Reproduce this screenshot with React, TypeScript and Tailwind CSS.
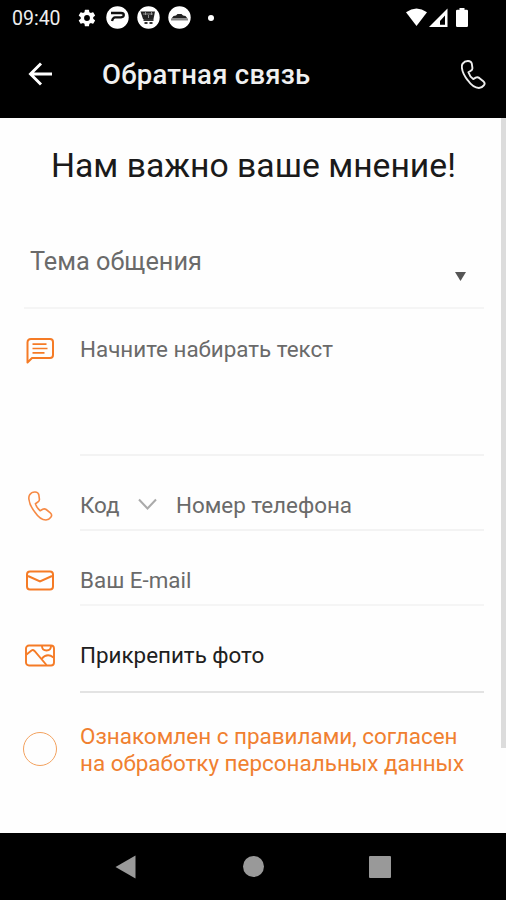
import React from "react";

const PHONE =
  "M1.700 3.600C3 1.800 5 .9 7.100 1c2.300.1 3.300.9 3.700 2.600l.6 4.200c.2 1.600-.4 2.300-1.500 2.900l-2.500 1.600c.9 2.800 2.500 5.100 4.800 6.800l2.500-1.500c1.200-.6 2.500-.4 3.500.3l4.100 3.300c1.700 1.400 1.700 2.700.5 4.200-1.200 1.700-2.900 2.500-4.900 2.600-3.800 0-7.700-2.800-11.100-7.700C3.500 16.200 1.300 11.700.9 7.800.7 6.100 .9 4.700 1.700 3.600Z";

function Phone({ className, width = 1.7 }: { className: string; width?: number }) {
  return (
    <svg className={className} viewBox="0 0 25 29" preserveAspectRatio="none" fill="none" stroke="currentColor" strokeWidth={width} strokeLinejoin="round">
      <path d={PHONE} />
    </svg>
  );
}

function StatusBar() {
  return (
    <div className="flex h-9 items-center pb-px pl-3 text-white">
      <span className="w-[64px] pt-[3px] text-[19.5px] leading-none whitespace-nowrap text-[#eee]">09:40</span>
      <svg className="ml-px h-5 w-5" viewBox="0 0 24 24" fill="currentColor">
        <path d="M19.4 13c.1-.3.1-.6.1-1s0-.7-.1-1l2.100-1.600c.2-.2.2-.4.1-.6l-2-3.500c-.1-.2-.4-.3-.6-.2l-2.500 1a7 7 0 0 0-1.700-1l-.4-2.600a.5.500 0 0 0-.5-.5h-4a.5.500 0 0 0-.5.5L9 5.100a7 7 0 0 0-1.700 1l-2.500-1c-.2-.1-.5 0-.6.2l-2 3.500c-.1.2-.1.500.1.600L4.500 11a8 8 0 0 0 0 2l-2.200 1.600c-.2.2-.2.400-.1.600l2 3.500c.1.200.4.300.6.200l2.500-1a7 7 0 0 0 1.700 1l.4 2.600c0 .3.2.5.5.5h4c.3 0 .5-.2.5-.5l.4-2.600a7 7 0 0 0 1.700-1l2.500 1c.2.100.5 0 .6-.2l2-3.500c.1-.2.1-.4-.1-.6zM12 15.500a3.500 3.500 0 1 1 0-7 3.500 3.500 0 0 1 0 7z" />
      </svg>
      <svg className="ml-[9px] h-[23px] w-[23px]" viewBox="0 0 23 23">
        <circle cx="11.500" cy="11.500" r="11.200" fill="#fff" />
        <path d="M5 7H15q2.800 0 2.800 2T15 11.300H9q-2 0-3 3.700" fill="none" stroke="#111" strokeWidth="2.300" />
      </svg>
      <svg className="ml-2 h-[23px] w-[23px]" viewBox="0 0 23 23">
        <circle cx="11.500" cy="11.500" r="11.200" fill="#fff" />
        <path d="M3.500 5.500h14.500l-1.500 7.500H6z" fill="#222" />
        <path d="M6.500 14h10M7.500 17h3m2 0h3" fill="none" stroke="#333" strokeWidth="2.200" />
        <path d="M6 8h10M8.500 6v3m3 0v3m3-6v3" stroke="#aaa" strokeWidth=".8" />
      </svg>
      <svg className="ml-2 h-[23px] w-[23px]" viewBox="0 0 23 23">
        <circle cx="11.500" cy="11.500" r="11.200" fill="#fff" />
        <path d="M3.500 12.500l2-2.500 2.500-.5 1.500-1.500h4L15 9.500l2.500.5 2 2.500z" fill="#222" />
        <path d="M3 13.500h17" stroke="#888" strokeWidth="2" />
      </svg>
      <span className="ml-[17px] h-[6px] w-[6px] rounded-full bg-white" />
      <svg className="ml-[192px] h-5 w-[63px]" viewBox="0 0 63 20" fill="#fff">
        <path d="M0 4.200Q10.500-3.200 21 4.200L10.500 18z" />
        <path d="M23 19L41.500.5V19zM34 16.800h5V7.500L34 13z" fillRule="evenodd" />
        <path d="M53.500 0h5v1.800h2.300q1.200 0 1.200 1.200v14.800q0 1.200-1.200 1.200h-9.600q-1.200 0-1.200-1.200V3q0-1.200 1.200-1.200h2.300z" />
      </svg>
    </div>
  );
}

function AppBar() {
  return (
    <header className="flex h-[82px] items-center bg-black pr-5 pb-[6px] pl-[28px] text-white">
      <svg className="h-[24px] w-[25px]" viewBox="0 0 25 24" fill="none" stroke="currentColor" strokeWidth="2.900">
        <path d="M24 12H2.500M13 1.500L2.500 12 13 22.500" />
      </svg>
      <h1 className="ml-[49px] pt-0.5 text-[27.5px] leading-8 font-medium tracking-[0.25px] whitespace-nowrap text-[#f0f0f0]">Обратная связь</h1>
      <Phone className="ml-auto h-[29px] w-[25px] text-[#eee]" width={1.9} />
    </header>
  );
}

export default function App() {
  return (
    <div className="flex h-[900px] w-[506px] flex-col overflow-hidden bg-black font-[Roboto,sans-serif]">
      <StatusBar />
      <AppBar />
      <main className="flex h-[715px] bg-[#fefefe] text-[#6a6a6a]">
        <div className="w-[501px] pr-[17px] pl-6">
          <h2 className="pt-[27px] pl-[27px] text-[33.7px] leading-[42px] whitespace-nowrap text-[#1a1a1a]">Нам важно ваше мнение!</h2>
          <div className="mt-[48px] flex h-[74px] border-b-2 border-[#f5f5f5] pl-1.5">
            <span className="pt-[11px] text-[25.3px] leading-8 whitespace-nowrap">Тема общения</span>
            <svg className="mt-[37px] mr-[18px] ml-auto h-[9px] w-[11px]" viewBox="0 0 11 9" fill="#555">
              <path d="M0 0h11L5.500 9z" />
            </svg>
          </div>
          <div className="flex h-[147px]">
            <svg className="mt-[28px] ml-[2px] h-[27px] w-[28px] shrink-0 text-[#f57b26]" viewBox="0 0 28 27" fill="none" stroke="currentColor" strokeWidth="2" strokeLinejoin="round">
              <path d="M5 2h19q3 0 3 3v13q0 3-3 3H6l-4.500 4.500V5.500Q1.500 2 5 2z" />
              <path d="M6.500 7.200h14M6.500 11.500h15M6.500 15.800h12" strokeWidth="1.700" />
            </svg>
            <div className="ml-[26px] grow border-b-2 border-[#f3f3f3] pt-[24px] text-[22.4px] leading-8 whitespace-nowrap">Начните набирать текст</div>
          </div>
          <div className="flex h-[75px]">
            <Phone className="mt-[35px] ml-[4px] h-[30px] w-[25px] shrink-0 text-[#f68a45]" width={1.6} />
            <div className="ml-[27px] flex grow border-b-2 border-[#f3f3f3] pt-[33px] text-[22.4px] leading-8 whitespace-nowrap">
              <span className="w-[58px]">Код</span>
              <svg className="mt-[9px] h-[13px] w-[19px]" viewBox="0 0 19 13" fill="none" stroke="#aaa" strokeWidth="2">
                <path d="M1 1.500l8.500 9 8.500-9" />
              </svg>
              <span className="ml-[19px]">Номер телефона</span>
            </div>
          </div>
          <div className="flex h-[75px]">
            <svg className="mt-[39px] ml-[2px] h-[21px] w-[28px] shrink-0 text-[#f57b26]" viewBox="0 0 28 21" fill="none" stroke="currentColor" strokeWidth="2">
              <rect x="1" y="1.500" width="26" height="18" rx="3" />
              <path d="M2 6l12 5.500L26 6" />
            </svg>
            <div className="ml-[26px] grow border-b-2 border-[#f5f5f5] pt-[33px] text-[22.4px] leading-8 whitespace-nowrap">Ваш E-mail</div>
          </div>
          <div className="flex h-[87px]">
            <svg className="mt-[38px] ml-px h-[23px] w-[30px] shrink-0 text-[#f57b26]" viewBox="0 0 30 23" fill="none" stroke="currentColor" strokeWidth="1.900">
              <rect x="1" y="1.500" width="28" height="20" rx="3" />
              <path d="M1.500 10.500L6.500 6.500Q8 5.500 9.500 7L21.500 21M16.500 15Q22 8.500 28.500 13.500M17 2q0 4.500 4.500 4.500T26 2" />
            </svg>
            <div className="ml-[25px] grow border-b-2 border-[#e3e3e3] pt-[33px] text-[22.4px] leading-8 whitespace-nowrap text-[#202020]">Прикрепить фото</div>
          </div>
          <div className="flex pt-[30px] text-[#f08030]">
            <span className="mt-[9px] -ml-px h-[34px] w-[34px] shrink-0 rounded-full border-[1.500px] border-[#f3a25f]" />
            <p className="ml-[23px] text-[22.45px] leading-[27px] whitespace-nowrap">
              <span className="block">Ознакомлен с правилами, согласен</span>
              <span className="block">на обработку персональных данных</span>
            </p>
          </div>
        </div>
        <div className="h-[630px] w-[5px] bg-[#dcdcdc]" />
      </main>
      <nav className="flex h-[67px] items-center bg-black pl-[115px]">
        <svg className="h-[24px] w-[21px]" viewBox="0 0 21 24" fill="#999"><path d="M.5 12L20.500.5v23z" /></svg>
        <span className="ml-[107px] h-[21px] w-[21px] rounded-full bg-[#999]" />
        <span className="ml-[105px] h-[22px] w-[22px] rounded-[1px] bg-[#999]" />
      </nav>
    </div>
  );
}
